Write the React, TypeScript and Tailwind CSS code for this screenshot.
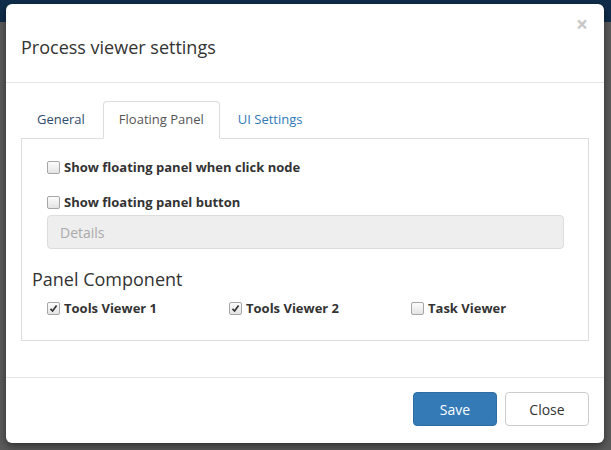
function Check({ checked }: { checked?: boolean }) {
  return (
    <span className="flex h-[13px] w-[13px] shrink-0 items-center justify-center rounded-[2px] border border-[#a6a6a6] bg-gradient-to-b from-[#fcfcfc] to-[#e4e4e4]">
      {checked && (
        <svg width="9" height="9" viewBox="0 0 9 9">
          <path d="M1.5 4.8 L3.6 7 L7.6 1.6" fill="none" stroke="#333" strokeWidth="1.7" />
        </svg>
      )}
    </span>
  );
}

function CheckRow({ label, checked }: { label: string; checked?: boolean }) {
  return (
    <label className="flex items-center gap-[4px] text-[13px] font-bold text-[#333]">
      <Check checked={checked} />
      <span>{label}</span>
    </label>
  );
}

export default function App() {
  return (
    <div
      className="relative h-[450px] w-[611px] overflow-hidden bg-[#5b5b5b]"
      style={{ fontFamily: '"Open Sans", "Liberation Sans", sans-serif' }}
    >
      {/* dimmed page behind the modal */}
      <div className="h-[22px] w-full bg-[#0f2d4b]" />

      <div className="absolute left-[6px] top-[4px] flex h-[439px] w-[598px] flex-col rounded-[6px] bg-white shadow-[0_3px_9px_rgba(0,0,0,0.5)]">
        <div className="relative flex h-[79px] items-center border-b border-[#e5e5e5] px-[15px] pt-[8px]">
          <h4 className="text-[18px] text-[#333]">Process viewer settings</h4>
          <span className="absolute right-[16px] top-[10px] text-[21px] font-bold leading-none text-[#c8c8c8]">×</span>
        </div>

        <div className="px-[15px] pt-[18px]">
          <div className="flex h-[38px] border-b border-[#ddd] text-[13px]">
            <div className="flex items-center px-[16px] text-[#2f4a6a]">General</div>
            <div className="mb-[-1px] ml-[2px] flex items-center rounded-t-[4px] border border-[#ddd] border-b-white bg-white px-[15px] text-[#555]">
              Floating Panel
            </div>
            <div className="ml-[2px] flex items-center px-[16px] text-[#337ab7]">UI Settings</div>
          </div>

          <div className="h-[202px] border border-t-0 border-[#ddd] px-[25px] pt-[19px]">
            <CheckRow label="Show floating panel when click node" />
            <div className="mt-[15px]">
              <CheckRow label="Show floating panel button" />
            </div>
            <div className="mt-[3px] flex h-[34px] w-[517px] items-center rounded-[4px] border border-[#ddd] bg-[#eee] px-[12px] text-[14px] text-[#aaa]">
              Details
            </div>
            <h4 className="ml-[-15px] mt-[17px] text-[18px] text-[#333]">Panel Component</h4>
            <div className="mt-[6px] grid grid-cols-[182px_182px_1fr]">
              <CheckRow label="Tools Viewer 1" checked />
              <CheckRow label="Tools Viewer 2" checked />
              <CheckRow label="Task Viewer" />
            </div>
          </div>
        </div>

        <div className="mt-[36px] flex justify-end gap-[8px] border-t border-[#e5e5e5] px-[15px] pt-[14px]">
          <button className="h-[34px] w-[84px] rounded-[4px] border border-[#2e6da4] bg-[#337ab7] text-[14px] text-white">
            Save
          </button>
          <button className="h-[34px] w-[84px] rounded-[4px] border border-[#ccc] bg-white text-[14px] text-[#333]">
            Close
          </button>
        </div>
      </div>
    </div>
  );
}
